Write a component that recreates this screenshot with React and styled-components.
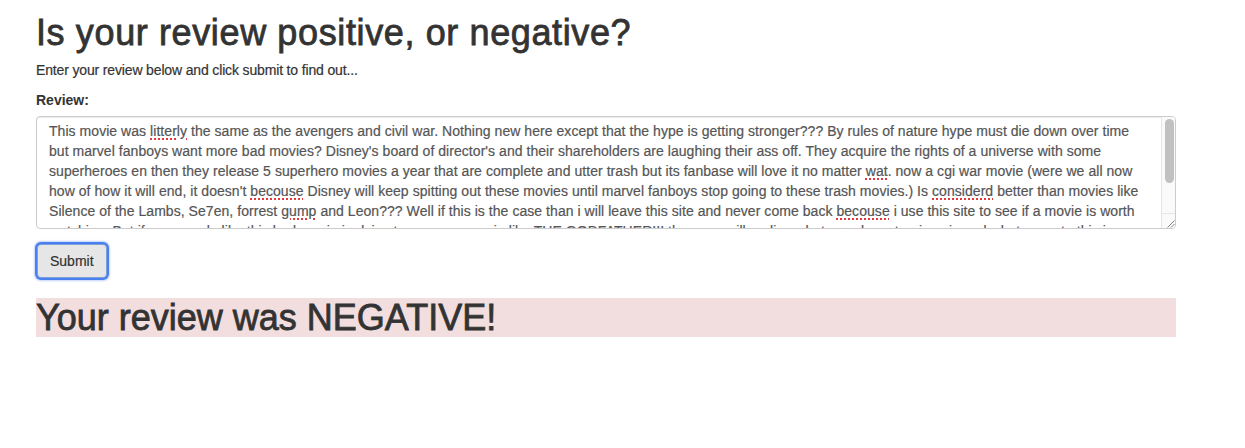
import React from "react";
import styled, { createGlobalStyle } from "styled-components";

const GlobalStyle = createGlobalStyle`
  html, body {
    margin: 0;
    padding: 0;
    background: #ffffff;
  }
  body {
    font-family: "Liberation Sans", Arial, Helvetica, sans-serif;
    font-size: 14px;
    line-height: 1.42857;
    color: #333333;
  }
  * { box-sizing: border-box; }
`;

const Container = styled.main`
  width: 1140px;
  margin-left: 36px;
`;

const Title = styled.h1`
  margin: 13px 0 8px;
  font-size: 36px;
  font-weight: 400;
  line-height: 1.1;
  color: #333333;
  letter-spacing: 0.62px;
  -webkit-text-stroke: 0.8px #333333;
`;

const Lead = styled.p`
  margin: 0 0 10px;
  font-size: 14px;
  letter-spacing: -0.15px;
  -webkit-text-stroke: 0.2px #333333;
`;

const FormGroup = styled.div`
  margin-bottom: 15px;
`;

const Label = styled.label`
  display: inline-block;
  margin-bottom: 5px;
  font-weight: 700;
  font-size: 14px;
`;

const TextArea = styled.div`
  position: relative;
  width: 100%;
  height: 113px;
  border: 1px solid #cccccc;
  border-radius: 4px;
  background: #ffffff;
  box-shadow: inset 0 1px 1px rgba(0, 0, 0, 0.075);
  overflow: hidden;
`;

const TextContent = styled.div`
  height: 100%;
  padding: 4px 27px 6px 12px;
  color: #555555;
  font-size: 14px;
  line-height: 20px;
  overflow-y: auto;
  overflow-x: hidden;
  scrollbar-width: none;
  -webkit-text-stroke: 0.2px #555555;
  &::-webkit-scrollbar { display: none; }
`;

const Line = styled.div`
  white-space: nowrap;
  letter-spacing: 0.05px;
`;

const Typo = styled.span`
  text-decoration: underline dotted #e0393e;
  text-decoration-thickness: 2px;
  text-underline-offset: 3px;
`;

const ScrollTrack = styled.div`
  position: absolute;
  top: 0;
  right: 0;
  bottom: 15px;
  width: 14px;
  padding: 2px 2px 0 3px;
  background: #fafafa;
  border-left: 1px solid #e6e6e6;
`;

const ScrollThumb = styled.div`
  width: 9px;
  height: 64px;
  border-radius: 5px;
  background: #c1c1c1;
`;

const Resizer = styled.div`
  position: absolute;
  right: 0;
  bottom: 0;
  width: 14px;
  height: 15px;
  display: flex;
  align-items: flex-end;
  justify-content: flex-end;
  background: #fafafa;
  border-left: 1px solid #e6e6e6;
  border-top: 1px solid #e6e6e6;
`;

const SubmitButton = styled.button`
  display: inline-block;
  margin-left: 1px;
  padding: 6px 12px;
  font-family: inherit;
  font-size: 14px;
  line-height: 20px;
  color: #333333;
  background: #e6e6e6;
  border: 1px solid #7e9fd8;
  border-radius: 4px;
  box-shadow: 0 0 0 2px #4a7ff0, 0 0 2px 3px rgba(74, 127, 240, 0.35);
  -webkit-text-stroke: 0.2px #333333;
  cursor: pointer;
`;

const Result = styled.h1`
  margin: 20px 0 10px;
  font-size: 36px;
  font-weight: 400;
  line-height: 1.1;
  color: #333333;
  background: #f2dede;
  -webkit-text-stroke: 0.8px #333333;
`;

const T = ({ children }) => <Typo>{children}</Typo>;

const lines = [
  <>This movie was <T>litterly</T> the same as the avengers and civil war. Nothing new here except that the hype is getting stronger??? By rules of nature hype must die down over time</>,
  <>but marvel fanboys want more bad movies? Disney's board of director's and their shareholders are laughing their ass off. They acquire the rights of a universe with some</>,
  <>superheroes en then they release 5 superhero movies a year that are complete and utter trash but its fanbase will love it no matter <T>wat</T>. now a cgi war movie (were we all now</>,
  <>how of how it will end, it doesn't <T>becouse</T> Disney will keep spitting out these movies until marvel fanboys stop going to these trash movies.) Is <T>considerd</T> better than movies like</>,
  <>Silence of the Lambs, Se7en, forrest <T>gump</T> and Leon??? Well if this is the case than i will leave this site and never come back <T>becouse</T> i use this site to see if a movie is worth</>,
  <>watching. But if you people like this bad movie i advise to go see a movie like THE GODFATHER!!! then you will <T>realise</T> what a real masterpiece is and what a waste this is.</>,
  <>Marvel should stop making these movies and start making real movies with a story instead of explosions and jokes every two seconds. I am done with this.</>,
];

export default function App() {
  return (
    <>
      <GlobalStyle />
      <Container>
        <Title>Is your review positive, or negative?</Title>
        <Lead>Enter your review below and click submit to find out...</Lead>
        <form onSubmit={(e) => e.preventDefault()}>
          <FormGroup>
            <Label htmlFor="review">Review:</Label>
            <TextArea>
              <TextContent id="review" role="textbox" aria-multiline="true">
                {lines.map((l, i) => (
                  <Line key={i}>{l}</Line>
                ))}
              </TextContent>
              <ScrollTrack>
                <ScrollThumb />
              </ScrollTrack>
              <Resizer>
                <svg width="9" height="9" viewBox="0 0 9 9" aria-hidden="true">
                  <path d="M8.5 1.5 L1.5 8.5 M8.5 5 L5 8.5" stroke="#7a7a7a" strokeWidth="0.9" fill="none" />
                </svg>
              </Resizer>
            </TextArea>
          </FormGroup>
          <SubmitButton type="submit">Submit</SubmitButton>
        </form>
        <Result>Your review was NEGATIVE!</Result>
      </Container>
    </>
  );
}
